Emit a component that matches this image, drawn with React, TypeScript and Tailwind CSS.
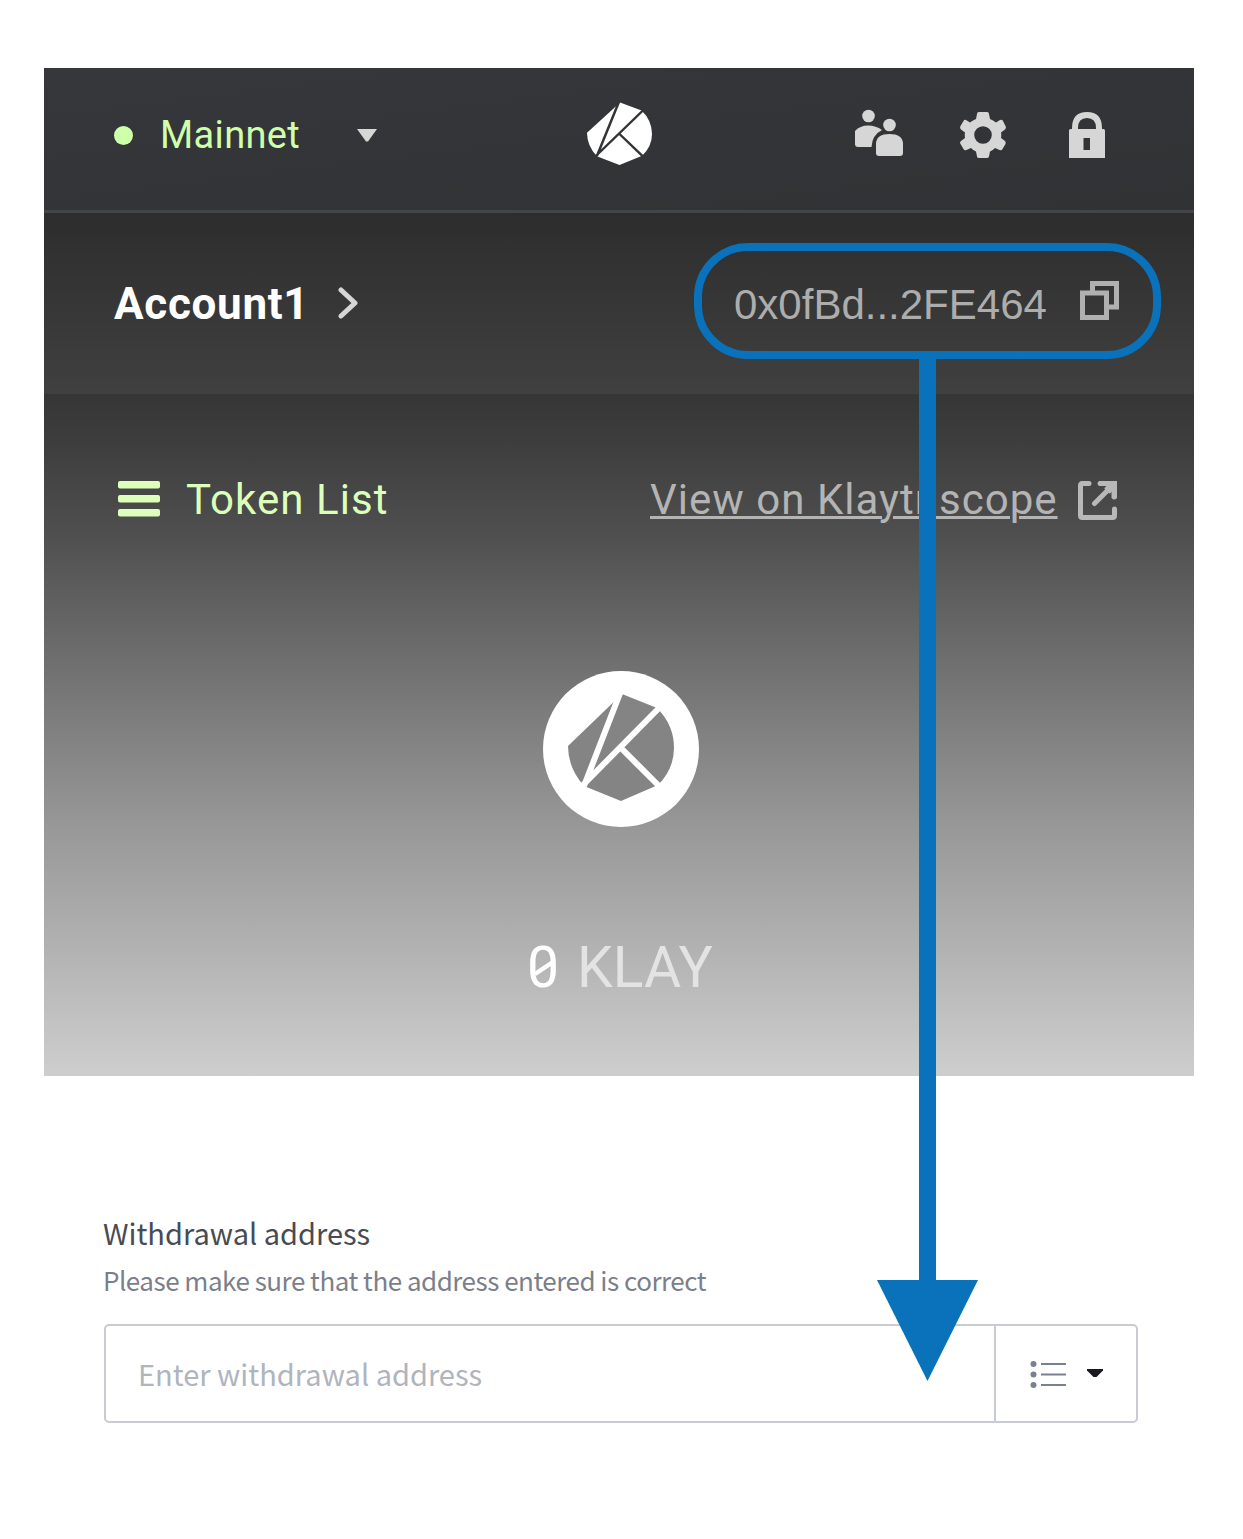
function KlaytnShape({ className, fill, line, width }: { className: string; fill: string; line: string; width: number }) {
  return (
    <svg className={className} viewBox="0 0 106 106" fill="none" preserveAspectRatio="none">
      <path d="M0 51 L54 -1 L89 13 Q106 30 106 53 Q106 74 90 90 L53 106 L16 91 Q0 73 0 51Z" fill={fill} />
      <path d="M52.500 -3 L16 91 M14 91 L92 12 M53 53 L92 92" stroke={line} strokeWidth={width} />
    </svg>
  );
}

function Header() {
  return (
    <header className="flex h-[145px] items-center border-b-[3px] border-[#444549] bg-gradient-to-br from-[#36373b] to-[#313234] pb-[9px]">
      <div className="flex w-[543px] items-center pl-[70px]">
        <span className="mt-[2px] size-[19px] rounded-full bg-[#ceffa9]" />
        <span className="ml-[27px] w-[197px] whitespace-nowrap text-[38px] leading-none tracking-[0.35px] text-[#ceffa9]">Mainnet</span>
        <svg className="mt-[2px] h-[13px] w-[20px]" viewBox="0 0 20 13"><path d="M0 0H20L11 12.500H9Z" fill="#d6d6d6" /></svg>
      </div>
      <KlaytnShape className="mt-[-2px] h-[62px] w-[65px] overflow-visible" fill="#fff" line="#333436" width={4} />
      <div className="ml-[203px] flex items-center">
        <svg className="mt-[-3px] h-[49px] w-[49px]" viewBox="0 0 49 49" fill="#d6d6d6">
          <circle cx="13.5" cy="7" r="6.3" />
          <path d="M0 22Q5 16.5 13 16.5Q21 16.5 27 21Q17 26 16.5 38H3Q0 38 0 35Z" />
          <circle cx="34.5" cy="16" r="8" fill="#333436" />
          <circle cx="34.5" cy="16" r="6.3" />
          <path d="M21 34Q22 25 34.5 25Q47 25 48 34V44Q48 47 45 47H24Q21 47 21 44Z" />
        </svg>
        <svg className="ml-[56px] h-[46px] w-[46px]" viewBox="0 0 46 46">
          <path fill="#d6d6d6" fillRule="evenodd" d="M19 0H27Q29 0 29 2L30 7Q33 8 36 10.5L40 8Q42 7 43 9L45.5 14Q46.5 16 45 17.5L41 20.5Q41.5 23 41 26L45 29Q46 30 45.5 32L42.5 37Q41.5 39 39.5 38L35 36Q33 38 30 39.5L29 44.5Q28.5 46 27 46H19Q17 46 17 44.5L16 39.5Q13 38 11 36L6.500 38Q4.500 39 3.500 37L.5 32Q-.5 30 1 29L5 26Q4.500 23 5 20.500L1 17.500Q-.5 16 .5 14L3.500 9Q4.500 7 6 8L10 10.500Q13 8 16 7L17 2Q17 0 19 0ZM23 14.200A8.800 8.800 0 1 0 23 31.800A8.800 8.800 0 1 0 23 14.200Z" />
        </svg>
        <svg className="ml-[63px] h-[46px] w-[36px]" viewBox="0 0 36 46">
          <path d="M6 20V16Q6 3 18 3Q30 3 30 16V20" fill="none" stroke="#d6d6d6" strokeWidth="6" />
          <path fill="#d6d6d6" fillRule="evenodd" d="M1.500 17H34.500Q36 17 36 18.500V46H0V18.500Q0 17 1.500 17ZM14.500 26V38H21V26Z" />
        </svg>
      </div>
    </header>
  );
}

function AccountBar() {
  return (
    <section className="flex h-[181px] bg-gradient-to-b from-[#2d2d2d] to-[#404040]">
      <div className="flex w-[690px] items-start pl-[70px] pt-[70px]">
        <span className="w-[224px] whitespace-nowrap text-[44px] font-bold leading-[43px] tracking-[0.7px] text-white">Account1</span>
        <svg className="mt-[4px] h-[32px] w-[21px]" viewBox="0 0 21 32"><path d="M3 3L17 16L3 29" fill="none" stroke="#d6d6d6" strokeWidth="5" strokeLinecap="round" strokeLinejoin="round" /></svg>
      </div>
      <div className="pt-[70px] font-['Liberation_Sans',sans-serif] text-[42px] leading-[44px] text-[#adadad]">0x0fBd...2FE464</div>
      <svg className="ml-[33px] mt-[68px] h-[39px] w-[39px]" viewBox="0 0 39 39" fill="none" stroke="#b0b0b0" strokeWidth="5">
        <path d="M2.500 12H26.500V36.500H2.500Z" /><path d="M12.500 11V2.500H36.500V26H28" />
      </svg>
    </section>
  );
}

function TokenPanel() {
  return (
    <section className="h-[682px] bg-[linear-gradient(to_bottom,#363636_0%,#3c3c3c_6%,#4e4e4e_20%,#727272_41%,#979797_63%,#b0b0b0_80%,#cecece_100%)]">
      <div className="flex h-[277px] pt-[84px]">
        <svg className="ml-[74px] mt-[3px] h-[36px] w-[42px]" viewBox="0 0 42 36" fill="#dcffb9">
          <rect width="42" height="7.500" rx="2" /><rect y="14" width="42" height="7.500" rx="2" /><rect y="28" width="42" height="7.500" rx="2" />
        </svg>
        <span className="ml-[26px] w-[464px] whitespace-nowrap text-[42px] leading-[44px] tracking-[1.05px] text-[#dcffb9]">Token List</span>
        <a className="w-[409px] whitespace-nowrap text-[42px] leading-[44px] tracking-[1.02px] text-[#b4b4b4] underline decoration-[3px] underline-offset-[2px]">View on Klaytnscope</a>
        <svg className="ml-[19px] mt-[3px] h-[39px] w-[39px]" viewBox="0 0 39 39" fill="none" stroke="#b8b8b8" strokeWidth="5" strokeLinecap="round">
          <path d="M11 2.500H4.500Q2.500 2.500 2.500 4.500V34.500Q2.500 36.500 4.500 36.500H34.500Q36.500 36.500 36.500 34.500V28M16.500 22.500L34 5" />
          <path d="M21 0H39V17Q36 20 33.500 17V10L29 5H21Q18 2.500 21 0Z" fill="#b8b8b8" stroke="none" />
          <path d="M29 10L36 3" strokeWidth="8" strokeLinecap="butt" />
        </svg>
      </div>
      <div className="ml-[499px] flex size-[156px] items-center justify-center rounded-full bg-white">
        <KlaytnShape className="mt-[-2px] h-[106px] w-[106px] overflow-visible" fill="#848484" line="#fff" width={6} />
      </div>
      <div className="ml-[483px] mt-[112px] flex h-[57px] items-center text-[57px] leading-[60px]">
        <span className="relative w-[36px] text-white">
          0
          <svg className="absolute left-[7px] top-[21px] h-[18px] w-[20px]" viewBox="0 0 20 18"><path d="M1 15L19 3" stroke="#fff" strokeWidth="4.500" /></svg>
        </span>
        <span className="ml-[14px] text-[#e3e3e3]">KLAY</span>
      </div>
    </section>
  );
}

function WithdrawalForm() {
  return (
    <section className="ml-[60px] w-[1034px] pt-[135px] font-['Noto_Sans_CJK_KR',sans-serif]">
      <div className="ml-[-1px] h-[42px] whitespace-nowrap text-[29px] leading-[42px] text-[#484b52]">Withdrawal address</div>
      <div className="ml-[-1px] mt-[7px] h-[40px] whitespace-nowrap text-[26px] leading-[40px] tracking-[-0.5px] text-[#7b7f8b]">Please make sure that the address entered is correct</div>
      <div className="mt-[24px] flex h-[99px] rounded-[5px] border-2 border-[#c8cbd1]">
        <div className="w-[890px] whitespace-nowrap border-r-2 border-[#c8cbd1] pl-[32px] text-[29px] leading-[94px] text-[#b0b4bd]">Enter withdrawal address</div>
        <svg className="ml-[34px] mt-[34px] h-[30px] w-[38px]" viewBox="0 0 38 30" fill="#79808f">
          <circle cx="3.500" cy="4" r="3" /><circle cx="3.500" cy="14.500" r="3" /><circle cx="3.500" cy="25" r="3" />
          <path d="M11 3H36V5H11ZM11 13.500H36V15.500H11ZM11 24H36V26H11Z" />
        </svg>
        <svg className="ml-[19px] mt-[42px] h-[10px] w-[16px]" viewBox="0 0 16 10"><path d="M0 1H16V2.500L9.500 9H6.500L0 2.500Z" fill="#191a1d" /></svg>
      </div>
    </section>
  );
}

export default function App() {
  return (
    <main className="relative h-[1539px] w-[1243px] overflow-hidden bg-white pl-[44px] pt-[68px] font-['Roboto',sans-serif]">
      <div className="w-[1150px]">
        <Header />
        <AccountBar />
        <TokenPanel />
        <WithdrawalForm />
      </div>
      <div className="absolute left-[694px] top-[243px] h-[116px] w-[467px] rounded-[54px] border-8 border-[#0a72ba]" />
      <svg className="absolute left-[877px] top-[351px] h-[1030px] w-[101px]" viewBox="0 0 101 1030">
        <path d="M42 0H59V929H101L50.500 1030L0 929H42Z" fill="#0a72ba" />
      </svg>
    </main>
  );
}
